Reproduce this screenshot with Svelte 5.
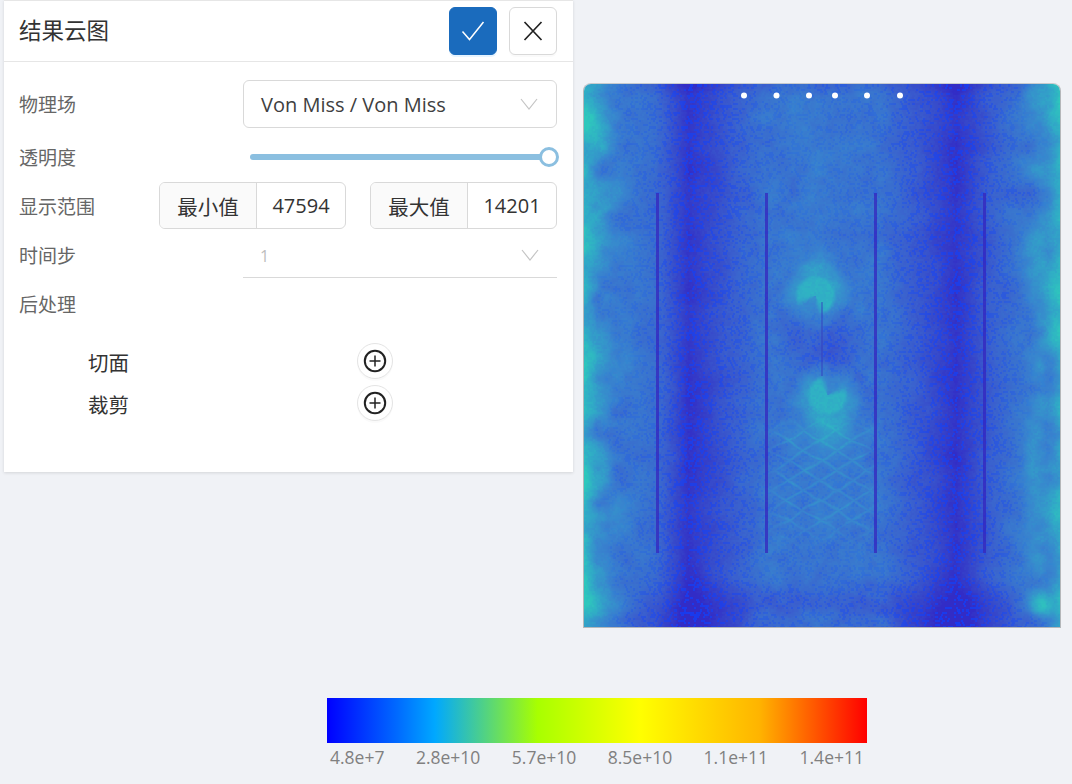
<script>
  import { onMount } from "svelte";

  const ticks = ["4.8e+7", "2.8e+10", "5.7e+10", "8.5e+10", "1.1e+11", "1.4e+11"];
  const postItems = ["切面", "裁剪"];

  let plot;

  const hprofile = [
    [0, 0.86], [0.03, 0.62], [0.06, 0.52], [0.1, 0.47], [0.15, 0.4], [0.22, 0.06], [0.3, 0.26], [0.38, 0.44],
    [0.5, 0.47], [0.62, 0.44], [0.7, 0.28], [0.78, 0.05], [0.86, 0.32], [0.92, 0.47], [0.97, 0.62], [1, 0.86],
  ];
  const ramp = [
    [0, 50, 44, 198], [0.3, 58, 96, 206], [0.55, 56, 132, 206], [0.8, 48, 170, 198], [1, 46, 200, 188],
  ];

  function hash(x, y) {
    const s = Math.sin(x * 127.1 + y * 311.7) * 43758.5453;
    return s - Math.floor(s);
  }
  function smooth(a, b, t) {
    const k = Math.min(1, Math.max(0, (t - a) / (b - a)));
    return k * k * (3 - 2 * k);
  }
  function vnoise(x, y) {
    const ix = Math.floor(x), iy = Math.floor(y);
    const fx = smooth(0, 1, x - ix), fy = smooth(0, 1, y - iy);
    const a = hash(ix, iy), b = hash(ix + 1, iy), c = hash(ix, iy + 1), d = hash(ix + 1, iy + 1);
    return a + (b - a) * fx + (c - a) * fy + (a - b - c + d) * fx * fy;
  }
  function fbm(x, y) {
    return 0.6 * vnoise(x, y) + 0.3 * vnoise(x * 2.1, y * 2.1) + 0.1 * vnoise(x * 4.3, y * 4.3);
  }
  function lerpTable(table, t) {
    for (let i = 1; i < table.length; i++) {
      if (t <= table[i][0]) {
        const k = (t - table[i - 1][0]) / (table[i][0] - table[i - 1][0]);
        return table[i - 1][1] + (table[i][1] - table[i - 1][1]) * k;
      }
    }
    return table[table.length - 1][1];
  }
  function colorOf(v) {
    v = Math.min(1, Math.max(0, v));
    for (let i = 1; i < ramp.length; i++) {
      if (v <= ramp[i][0]) {
        const k = (v - ramp[i - 1][0]) / (ramp[i][0] - ramp[i - 1][0]);
        return [1, 2, 3].map((c) => ramp[i - 1][c] + (ramp[i][c] - ramp[i - 1][c]) * k);
      }
    }
    return ramp[4].slice(1);
  }
  // 应力场: 裂纹两端的圆斑, 下方菱形网纹
  function blob(x, y, cx, cy, dark) {
    const dx = x - cx, dy = y - cy;
    const d = Math.hypot(dx, dy);
    const a = Math.atan2(dy, dx);
    let diff = Math.abs(a - dark);
    if (diff > Math.PI) diff = 2 * Math.PI - diff;
    const sector = smooth(0.35, 1.15, diff);
    return { core: (1 - smooth(16, 22, d)) * sector, halo: 1 - smooth(18, 40, d), shade: (1 - smooth(18, 34, d)) * (1 - sector) };
  }
  function field(x, y) {
    const u = (x - 583) / 478;
    let v = lerpTable(hprofile, u);
    const edge = Math.max(smooth(0.14, 0.02, u), smooth(0.86, 0.98, u));
    v += (fbm(x / 24, y / 24) - 0.5) * (0.1 + edge * 0.4);
    const mid = smooth(0.3, 0.38, u) * smooth(0.7, 0.62, u);
    v += (fbm(x / 13 + 9, y / 13) - 0.5) * 0.14 * mid;
    // 底部暗带
    v -= 0.14 * smooth(570, 612, y) * (1 - edge);
    v += 0.08 * smooth(605, 618, y) * mid;
    v -= 0.08 * smooth(96, 84, y) * (1 - edge);
    // 四角亮斑
    v += 0.26 * Math.exp(-(((x - 598) / 14) ** 2 + ((y - 118) / 28) ** 2));
    v += 0.24 * Math.exp(-(((x - 598) / 16) ** 2 + ((y - 605) / 16) ** 2));
    v += 0.3 * Math.exp(-(((x - 1042) / 12) ** 2 + ((y - 607) / 10) ** 2));
    // 裂纹中段偏暗
    const cd = Math.hypot((x - 822) / 55, (y - 345) / 50);
    v -= 0.16 * (1 - smooth(0.2, 1.1, cd));
    // 菱形网纹
    const lat = smooth(410, 440, y) * smooth(560, 510, y) * smooth(755, 790, x) * smooth(885, 860, x);
    const wob = (fbm(x / 18, y / 18) - 0.5) * 0.35;
    const a = Math.abs(Math.sin(((x - 820) / 33 + (y - 400) / 20 + wob) * Math.PI));
    const b = Math.abs(Math.sin(((x - 820) / 33 - (y - 400) / 20 + wob) * Math.PI));
    const line = Math.max(1 - smooth(0, 0.4, a), 1 - smooth(0, 0.4, b));
    v += lat * (0.03 + line * 0.1);
    v += 0.2 * Math.exp(-(((x - 830) / 26) ** 2 + ((y - 428) / 16) ** 2));
    v += 0.14 * Math.exp(-(((x - 814) / 18) ** 2 + ((y - 266) / 12) ** 2));
    const t = blob(x, y, 815, 295, 2.0);
    const s = blob(x, y, 827, 395, -1.1);
    v += (t.halo + s.halo) * 0.2;
    v -= (t.shade + s.shade) * 0.05;
    v = v + (0.84 - v) * Math.max(t.core, s.core);
    return v;
  }

  function paint(ctx, w, h) {
    const img = ctx.createImageData(w, h);
    for (let py = 0; py < h; py++) {
      for (let px = 0; px < w; px++) {
        const x = px + 584, y = py + 84;
        const v = field(x, y);
        const row = Math.floor(y / 2.1);
        const col = Math.floor((x + (row % 2) * 1.15) / 2.3);
        const n = hash(col, row);
        let [r, g, b] = colorOf(v + (n - 0.5) * 0.06);
        if (n > 0.74 && v < 0.62) {
          const k = 0.72 * (1 - v / 0.62);
          r += (18 - r) * k;
          g += (62 - g) * k;
          b += (248 - b) * k;
        }
        const i = (py * w + px) * 4;
        img.data[i] = r;
        img.data[i + 1] = g;
        img.data[i + 2] = b;
        img.data[i + 3] = 255;
      }
    }
    ctx.putImageData(img, 0, 0);

    for (const sx of [657, 766, 875, 984]) {
      ctx.fillStyle = "rgba(52,34,190,0.72)";
      ctx.fillRect(sx - 584 - 1, 193 - 84, 3, 360);
    }
    ctx.fillStyle = "rgba(50,60,190,0.45)";
    ctx.fillRect(821 - 584, 302 - 84, 2, 74);
    ctx.fillStyle = "#fff";
    for (const dx of [744, 776.5, 809, 835, 867, 900]) {
      ctx.beginPath();
      ctx.arc(dx - 584, 95.5 - 84, 3, 0, Math.PI * 2);
      ctx.fill();
    }
  }

  onMount(() => {
    paint(plot.getContext("2d"), plot.width, plot.height);
  });
</script>

<div class="stage">
  <section class="panel">
    <header class="head">
      <h1>结果云图</h1>
      <button class="btn primary" aria-label="确定">
        <svg viewBox="0 0 24 24"><path d="M1.5 12.5 8.5 20.5 22.5 3" /></svg>
      </button>
      <button class="btn" aria-label="关闭">
        <svg viewBox="0 0 24 24"><path d="M3.5 3 20.5 21M20.5 3 3.5 21" /></svg>
      </button>
    </header>

    <div class="form">
      <div class="row first">
        <span class="label">物理场</span>
        <div class="select">
          <span>Von Miss / Von Miss</span>
          <svg class="chev" viewBox="0 0 18 12"><path d="M1 1l8 10 8-10" /></svg>
        </div>
      </div>

      <div class="row">
        <span class="label">透明度</span>
        <div class="slider"><span class="handle"></span></div>
      </div>

      <div class="row range">
        <span class="label">显示范围</span>
        <div class="group"><span class="addon">最小值</span><span class="val">47594</span></div>
        <div class="group"><span class="addon">最大值</span><span class="val">14201</span></div>
      </div>

      <div class="row time">
        <span class="label">时间步</span>
        <div class="select flat">
          <span>1</span>
          <svg class="chev" viewBox="0 0 18 12"><path d="M1 1l8 10 8-10" /></svg>
        </div>
      </div>

      <div class="row">
        <span class="label">后处理</span>
      </div>

      <ul class="post">
        {#each postItems as item}
          <li>
            <span class="post-name">{item}</span>
            <button class="add" aria-label="添加{item}">
              <svg viewBox="0 0 24 24"><circle cx="12" cy="12" r="10.2" /><path class="plus" d="M12 6.5v11M6.5 12h11" /></svg>
            </button>
          </li>
        {/each}
      </ul>
    </div>
  </section>

  <canvas class="plot" bind:this={plot} width="476" height="543"></canvas>

  <div class="legend">
    <div class="bar"></div>
    <div class="ticks">
      {#each ticks as t}<span>{t}</span>{/each}
    </div>
  </div>
</div>

<style>
  :global(body) {
    background: #f0f2f6;
  }
  .stage {
    position: relative;
    height: 784px;
    box-sizing: border-box;
    padding: 83px 0 0 583px;
    overflow: hidden;
    font-family: "Open Sans", "Noto Sans CJK SC", sans-serif;
  }

  .panel {
    position: absolute;
    left: 4px;
    top: 0;
    width: 569px;
    height: 472px;
    box-sizing: border-box;
    background: #fff;
    border-top: 1px solid #e6e6e6;
    box-shadow: 0 1px 3px rgba(0, 0, 0, 0.12);
  }
  .head {
    display: flex;
    align-items: center;
    gap: 12px;
    height: 60px;
    padding: 0 16px 0 15px;
    border-bottom: 1px solid #e6e6e6;
  }
  .head h1 {
    flex: 1;
    margin: -3px 0 0;
    font-size: 22.5px;
    font-weight: 400;
    color: #333;
  }
  .btn {
    width: 48px;
    height: 48px;
    padding: 0;
    display: grid;
    place-items: center;
    background: #fff;
    border: 1px solid #d9d9d9;
    border-radius: 6px;
    box-shadow: 0 2px 0 rgba(0, 0, 0, 0.02);
  }
  .btn svg {
    width: 24px;
    height: 24px;
    fill: none;
    stroke: #222;
    stroke-width: 1.7;
  }
  .btn.primary {
    background: #1a6bbd;
    border-color: #1a6bbd;
    box-shadow: 0 2px 0 rgba(5, 145, 255, 0.1);
  }
  .btn.primary svg {
    stroke: #fff;
    stroke-width: 1.5;
  }

  .form {
    padding: 18px 16px 0 15px;
  }
  .row {
    display: flex;
    align-items: center;
    height: 47px;
    margin-bottom: 2px;
  }
  .row.first {
    height: 48px;
    margin-bottom: 5px;
  }
  .row.time {
    margin-bottom: 2px;
  }
  .label {
    margin-right: auto;
    font-size: 19px;
    color: #666;
  }

  .select {
    width: 314px;
    height: 100%;
    box-sizing: border-box;
    display: flex;
    align-items: center;
    justify-content: space-between;
    padding: 0 18px 0 17px;
    border: 1px solid #d9d9d9;
    border-radius: 6px;
    font-size: 20px;
    color: #404040;
  }
  .select.flat {
    border-width: 0 0 1px;
    border-radius: 0;
    padding-top: 4px;
    font-size: 16px;
    color: #bdbdbd;
  }
  .chev {
    width: 18px;
    height: 12px;
    fill: none;
    stroke: #c4c4c4;
    stroke-width: 1.2;
  }
  .select.flat .chev {
    margin-top: -3px;
  }

  .slider {
    position: relative;
    width: 299px;
    height: 6px;
    margin-right: 8px;
    border-radius: 3px;
    background: #8bbfe0;
  }
  .handle {
    position: absolute;
    right: -10px;
    top: -7px;
    width: 20px;
    height: 20px;
    box-sizing: border-box;
    border: 3px solid #8bbfe0;
    border-radius: 50%;
    background: #fff;
  }

  .range {
    gap: 24px;
  }
  .group {
    display: flex;
    width: 187px;
    height: 100%;
    box-sizing: border-box;
    border: 1px solid #d9d9d9;
    border-radius: 6px;
    overflow: hidden;
    color: #333;
  }
  .addon {
    width: 96px;
    display: grid;
    place-items: center;
    border-right: 1px solid #d9d9d9;
    background: #fafafa;
    font-size: 20.5px;
  }
  .val {
    flex: 1;
    display: grid;
    place-items: center;
    font-size: 20px;
  }

  .post {
    list-style: none;
    margin: 13px 0 0;
    padding: 0 0 0 69px;
  }
  .post li {
    display: flex;
    align-items: center;
    height: 42px;
  }
  .post-name {
    width: 269px;
    padding-top: 2px;
    font-size: 20.5px;
    color: #333;
  }
  .add {
    width: 36px;
    height: 36px;
    padding: 0;
    display: grid;
    place-items: center;
    background: #fff;
    border: 1px solid #e4e4e4;
    border-radius: 50%;
    box-shadow: 0 2px 0 rgba(0, 0, 0, 0.02);
  }
  .add svg {
    width: 24px;
    height: 24px;
    fill: none;
    stroke: #222;
    stroke-width: 2;
  }
  .add .plus {
    stroke-width: 1.5;
  }

  .plot {
    display: block;
    width: 478px;
    height: 545px;
    box-sizing: border-box;
    border: 1px solid #b4b7ba;
    border-top-color: #c8cacc;
    border-radius: 8px 8px 0 0;
  }

  .legend {
    width: 540px;
    margin: 70px 0 0 -256px;
  }
  .bar {
    height: 45px;
    background: linear-gradient(90deg, #0000ff 0%, #006aff 13%, #00a8ff 20%, #a8ff00 39%, #ffff00 58%, #ffb400 80%, #ff0000 100%);
  }
  .ticks {
    display: flex;
    justify-content: space-between;
    padding: 2px 3px 0 3px;
    font-size: 17.5px;
    color: #808080;
  }
</style>
